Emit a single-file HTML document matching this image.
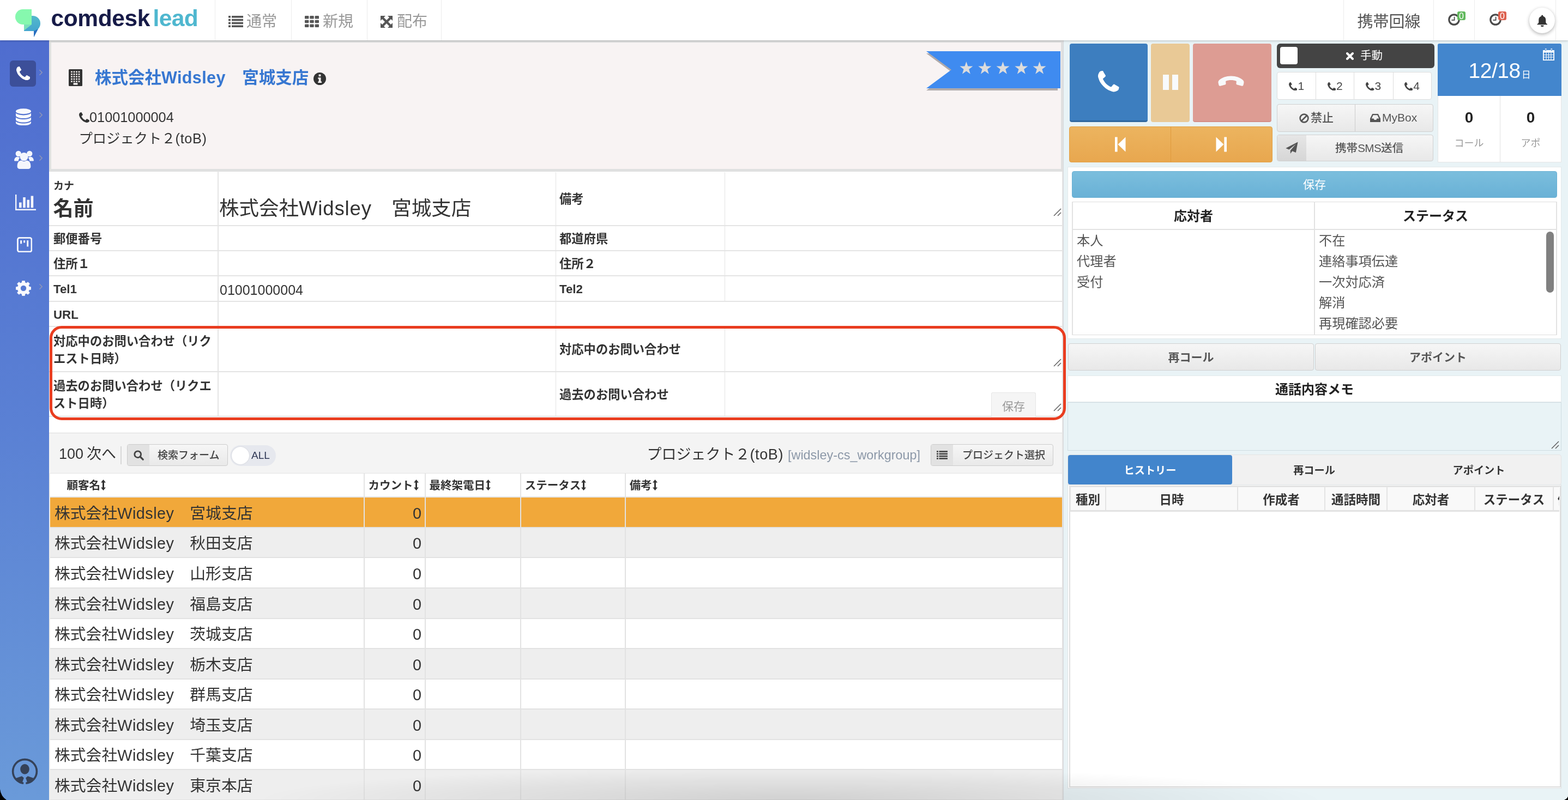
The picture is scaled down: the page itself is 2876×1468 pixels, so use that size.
<!DOCTYPE html>
<html lang="ja">
<head>
<meta charset="utf-8">
<title>comdesk lead</title>
<style>
*{box-sizing:border-box;margin:0;padding:0}
html,body{width:2876px;height:1468px;overflow:hidden;background:#fff}
body{font-family:"Liberation Sans","Noto Sans CJK JP",sans-serif;color:#333;font-size:28px;line-height:1.2;position:relative}
svg{display:block}
table{border-collapse:collapse;border-spacing:0}
.a{position:absolute}
.c{display:flex;align-items:center;justify-content:center;white-space:nowrap}

/* ---------- top bar ---------- */
#topbar{will-change:transform;position:absolute;left:0;top:0;width:2876px;height:74px;background:#fff;z-index:5;box-shadow:0 1px 4px rgba(0,0,0,.22)}
#logo-mark{position:absolute;left:27px;top:16px}
#logo-text{position:absolute;left:93.5px;top:6px;font-weight:bold;font-size:42.5px;line-height:56px;letter-spacing:-.4px;color:#171b48;white-space:nowrap}
#logo-text span{color:#4fb7cf;margin-left:5.5px;letter-spacing:-.6px}
.tsep{position:absolute;top:0;height:74px;width:1px;background:#ececec}
.nav{position:absolute;top:0;height:74px;color:#999;font-size:28px;line-height:74px;white-space:nowrap}
.nav svg{position:absolute;left:0;top:29px}
.nav span{position:absolute;top:3px}
#carrier{position:absolute;left:2489.5px;top:2.5px;font-size:29px;line-height:74px;color:#555;white-space:nowrap}
.badge{position:absolute;top:21px;width:15px;height:16px;border-radius:3px;color:#fff;font-size:16px;line-height:17px;text-align:center;transform-origin:50% 50%}
#bell{position:absolute;left:2805px;top:14px;width:47px;height:47px;border-radius:50%;background:#fff;box-shadow:0 2px 6px rgba(0,0,0,.3)}

/* ---------- sidebar ---------- */
#side{will-change:transform;z-index:4;position:absolute;left:0;top:74px;width:90px;height:1394px;background:linear-gradient(180deg,#4f6dcf 0%,#5a80d4 50%,#6a9ad9 100%)}
#side .act{position:absolute;left:18px;top:37px;width:48px;height:48px;border-radius:6px;background:#3c4f99}
#side svg{position:absolute}

/* ---------- left main ---------- */
#main{will-change:transform;position:absolute;left:0;top:0;width:1951px;height:1468px;background:#fff;overflow:hidden}
#head{position:absolute;left:90px;top:74px;width:1860px;height:241px;background:#f8f3f3;border:4px solid #dfe0e0;border-bottom-width:5px}
#title{position:absolute;left:174px;top:117px;font-size:30.5px;line-height:50px;font-weight:bold;color:#3777d1;white-space:nowrap}
#hphone{position:absolute;left:164px;top:197px;font-size:25.3px;line-height:36px;color:#333;white-space:nowrap}
#hproj{position:absolute;left:144.5px;top:236px;font-size:25.3px;line-height:36px;color:#333;white-space:nowrap}
#ribbon{position:absolute;left:1699px;top:90px}
/* form table */
#form{position:absolute;left:90px;top:314px;width:1859px;table-layout:fixed}
#form tr:first-child td{border-top-color:transparent}
#form td:first-child{border-left:none;border-right-width:2px}
#form td{border:2px solid #e4e4e4;border-left-width:1px;border-right-width:1px;vertical-align:middle;padding:4.5px 0 0 8px;font-size:25px;white-space:nowrap;overflow:hidden;position:relative}
#form td.l{font-weight:bold;font-size:22.3px;color:#333}
#form td.v{padding-left:2px}
#form tr.r1{height:98.5px}
#form tr.r2{height:46.375px}
#form tr.r3{height:82.6px}
.grip{position:absolute;right:1.5px;bottom:3px}
#redbox{position:absolute;left:90.5px;top:597.5px;width:1864px;height:173px;border:5px solid #e93d20;border-radius:22px;pointer-events:none;z-index:6}
#fsave{position:absolute;left:1818px;top:720px;width:82px;height:46px;background:#f5f5f5;border:1px solid #e6e6e6;border-bottom:none;border-radius:3px 3px 0 0;color:#999;font-size:21px;line-height:50px;text-align:center;z-index:2}

/* list */
#lbar{position:absolute;left:90px;top:794px;width:1858px;height:75px;background:#f4f4f4;border-top:1px solid #dcdcdc}
#lcount{position:absolute;left:18px;top:20px;font-size:27px;word-spacing:-1.5px;line-height:36px;color:#333;white-space:nowrap}
.btn{position:absolute;height:40px;border:1px solid #ccc;border-radius:4px;background:linear-gradient(180deg,#f6f6f6,#e9e9e9);font-size:20px;color:#444;white-space:nowrap;overflow:hidden}
.btn .ic{position:absolute;left:0;top:0;bottom:0;width:40px;background:#e2e2e2}
.btn .tx{position:absolute;top:0;line-height:40px;font-weight:500;font-size:19px}
#toggle{position:absolute;left:332px;top:22px;width:84px;height:38px;border-radius:19px;background:#e6e8ee;font-size:19px;line-height:38px;color:#2d3553}
#toggle i{position:absolute;left:3px;top:3px;width:32px;height:32px;border-radius:50%;background:#fff;box-shadow:0 0 2px rgba(0,0,0,.15)}
#toggle span{position:absolute;left:39px;top:0}
#lproj{position:absolute;left:1096.5px;top:19px;font-size:27px;line-height:40px;color:#333;white-space:nowrap}
#lproj small{font-size:23.4px;color:#8c98a8;margin-left:8px}
#list{position:absolute;left:89px;top:868px;width:1860px;table-layout:fixed}
#list th{height:43.9px;background:#fff;border:2px solid #e4e4e4;border-top:1px solid #e4e4e4;font-size:20.5px;font-weight:bold;text-align:left;padding:3px 0 0 7px;white-space:nowrap;color:#333}
#list td{height:55.55px;border:2px solid #e2e2e2;font-size:28.8px;padding:4px 5.5px 0 8px;white-space:nowrap;color:#333}
#list tr:nth-child(even) td{background:#eee}
#list tr.sel td{background:#f1a83a}
#list td.n{text-align:right}
.srt{display:inline-block;vertical-align:-2px;margin-left:1px}

#form .kana{font-size:19px;line-height:22px;font-weight:bold;position:absolute;left:8px;top:15px}
#form .nm{font-size:37px;line-height:44px;font-weight:bold;position:absolute;left:7.5px;top:46px}
#form .nmv{font-size:36.5px;line-height:44px;position:absolute;left:1px;top:44.5px}
#form td.wr{white-space:normal;line-height:32px}
#form td.l+td.v+td.l{padding-left:6.5px}
#shade{position:absolute;left:0;top:1378px;width:2876px;height:90px;z-index:8;pointer-events:none;background:radial-gradient(ellipse 980px 60px at 1450px 100%,rgba(0,0,0,.12),rgba(0,0,0,.07) 45%,rgba(0,0,0,0) 100%)}

/* right panel */
#right{will-change:transform;position:absolute;left:1951px;top:74px;width:925px;height:1394px;background:#e9f3f6}
#right>*{margin-left:-1951px;margin-top:-74px}
.bt{border-radius:4px}
.lnum{font-size:21px;line-height:40px;color:#444}
.gbtn{border:1px solid #d0d0d0;border-radius:4px;background:linear-gradient(180deg,#f6f6f6,#e8e8e8)}
.gtx{font-size:21px;line-height:36px;color:#555;font-weight:500;white-space:nowrap}
#date{left:2693.5px;top:102px;font-size:39px;line-height:56px;color:#fff;font-weight:300;white-space:nowrap;letter-spacing:-.5px}
#date span{font-size:16.5px;font-weight:400;margin-left:2.5px}
.stn{top:196px;text-align:center;font-size:28px;line-height:40px;font-weight:bold;color:#222}
.stl{top:248px;text-align:center;font-size:18px;line-height:30px;color:#999}
#rsave{left:1966px;top:314px;width:890px;height:49px;border-radius:4px;background:linear-gradient(180deg,#7bbedd,#69b1d6);color:#fff;font-size:21px;border:1px solid #6ab0d3}
#rsel{left:1966px;top:370px;width:890px;height:243.5px;table-layout:fixed;border:1px solid #ddd}
#rsel th{height:50px;font-size:24px;font-weight:bold;color:#222;border:2px solid #e2e2e2;border-top:none;text-align:center;padding-top:5px}
#rsel td{vertical-align:top;border-left:2px solid #e2e2e2;border-right:2px solid #e2e2e2;padding:1px 0 0 7px;font-size:24.2px;color:#555}
#rsel p{line-height:38.200px;white-space:nowrap}
.rb{font-size:21px;font-weight:bold;color:#555;padding-top:2px}
#memoh{left:1958px;top:689px;width:906px;height:49px;background:#fff;border:1px solid #e3e9eb;font-size:24px;font-weight:bold;color:#222;padding-top:4px}
#memo{left:1958px;top:738px;width:906px;height:89px;background:#e9f3f6;border:1px solid #cfdde2}
#memo .grip{right:3px;bottom:3px}
.tab{font-size:19.2px;font-weight:bold;color:#333;padding-top:4px}
#hist{left:1962px;top:892px;width:898px;height:47px;overflow:hidden;border-bottom:3px solid #e2e2e2}
#hist table{table-layout:fixed;width:946px}
#hist th{height:46px;background:#f9f9f9;border:2px solid #e4e4e4;border-bottom:none;font-size:22.500px;font-weight:bold;color:#333;text-align:center;white-space:nowrap;padding:2px 0 0}
#list .w{letter-spacing:.5px}
#list td:first-child,#list th:first-child{border-left:3px solid #ededed}
#title .w{letter-spacing:.4px}
#form .w{letter-spacing:.86px}
#hproj .w{letter-spacing:.64px}
#lproj .w{letter-spacing:.6px}
</style>
</head>
<body>

<div id="topbar">
  <svg id="logo-mark" width="48" height="54" viewBox="0 0 48 54">
    <linearGradient id="lg" x1="0" y1="0" x2="0" y2="1"><stop offset="0" stop-color="#53b9cb"/><stop offset="1" stop-color="#3e9dd0"/></linearGradient><path d="M17 13 h16 a14 14 0 0 1 14 14 v0 a14 14 0 0 1 -4 10 l-8 15 v-11 h-18 z" fill="url(#lg)"/>
    <path d="M35 41 l8 -4 l-8 15 z" fill="#2b6fc0"/>
    <path d="M15 1 h16 v28 h-16 a14 14 0 0 1 0 -28 z" fill="#86f8ae"/>
    <path d="M17 29 h14 v0 l-14 11 z" fill="#7be0b8"/>
      </svg>
  <div id="logo-text">comdesk<span>lead</span></div>

  <div class="tsep" style="left:394px"></div>
  <div class="nav" style="left:419px;width:100px">
    <svg width="27" height="21" viewBox="0 0 27 21" fill="#555"><rect x="0" y="0" width="4" height="3.6"/><rect x="6" y="0" width="21" height="3.6"/><rect x="0" y="5.8" width="4" height="3.6"/><rect x="6" y="5.8" width="21" height="3.6"/><rect x="0" y="11.6" width="4" height="3.6"/><rect x="6" y="11.6" width="21" height="3.6"/><rect x="0" y="17.4" width="4" height="3.6"/><rect x="6" y="17.4" width="21" height="3.6"/></svg>
    <span style="left:33px">通常</span>
  </div>
  <div class="tsep" style="left:534px"></div>
  <div class="nav" style="left:559px;width:100px">
    <svg width="26" height="21" viewBox="0 0 26 21" fill="#555"><rect x="0" y="0" width="7.4" height="5.6" rx="1.2"/><rect x="9.3" y="0" width="7.4" height="5.6" rx="1.2"/><rect x="18.6" y="0" width="7.4" height="5.6" rx="1.2"/><rect x="0" y="7.7" width="7.4" height="5.6" rx="1.2"/><rect x="9.3" y="7.7" width="7.4" height="5.6" rx="1.2"/><rect x="18.6" y="7.7" width="7.4" height="5.6" rx="1.2"/><rect x="0" y="15.4" width="7.4" height="5.6" rx="1.2"/><rect x="9.3" y="15.4" width="7.4" height="5.6" rx="1.2"/><rect x="18.6" y="15.4" width="7.4" height="5.6" rx="1.2"/></svg>
    <span style="left:33px">新規</span>
  </div>
  <div class="tsep" style="left:673px"></div>
  <div class="nav" style="left:698px;width:100px">
    <svg width="22" height="22" viewBox="0 0 22 22" fill="#555"><path d="M0 0h9l-3 3 5 5 5-5-3-3h9v9l-3-3-5 5 5 5 3-3v9h-9l3-3-5-5-5 5 3 3h-9v-9l3 3 5-5-5-5-3 3z"/></svg>
    <span style="left:30px">配布</span>
  </div>
  <div class="tsep" style="left:809px"></div>

  <div class="tsep" style="left:2464px"></div>
  <div id="carrier">携帯回線</div>
  <div class="tsep" style="left:2629px"></div>
  <svg class="a" style="left:2656px;top:24.500px" width="22" height="22" viewBox="0 0 22 22"><circle cx="11" cy="11" r="9.200" fill="none" stroke="#4a4a4a" stroke-width="3.200"/><path d="M11.600 5.800v6h-5.200" fill="none" stroke="#4a4a4a" stroke-width="1.800"/></svg>
  <div class="badge" style="left:2673px;background:#62b95e">0</div>
  <div class="tsep" style="left:2704px"></div>
  <svg class="a" style="left:2731.5px;top:24.500px" width="22" height="22" viewBox="0 0 22 22"><circle cx="11" cy="11" r="9.200" fill="none" stroke="#4a4a4a" stroke-width="3.200"/><path d="M11.600 5.800v6h-5.200" fill="none" stroke="#4a4a4a" stroke-width="1.800"/></svg>
  <div class="badge" style="left:2748px;background:#dd6250">0</div>
  <div id="bell"><svg class="a" style="left:14px;top:12.500px" width="19.500" height="22.500" viewBox="0 0 21 24"><path d="M10.500 0.500c1 0 1.800 0.800 1.800 1.800v0.500c3.200 0.800 5.200 3.600 5.200 7v4.500c0 1.600 1.200 3.200 3 4.200v1h-20v-1c1.800-1 3-2.600 3-4.200v-4.500c0-3.400 2-6.200 5.200-7v-0.500c0-1 0.800-1.800 1.800-1.800zM7.500 21h6a3 3 0 0 1-6 0z" fill="#333"/></svg></div>
  <div class="tsep" style="left:2853px"></div>
</div>

<div id="side">
  <div class="act"></div>
  <svg style="left:29.5px;top:48px" width="25.2" height="25.2" viewBox="192 128 1408 1408"><path fill="#fff" d="M1600 1240q0 27-10 70.500t-21 68.500q-21 50-122 106-94 51-186 51-27 0-53-3.500t-57.500-12.500-47-14.500-55.500-20.500-49-18q-98-35-175-83-127-79-264-216t-216-264q-48-77-83-175-3-9-18-49t-20.500-55.500-14.500-47-12.500-57.500-3.500-53q0-92 51-186 56-101 106-122 25-11 68.500-21t70.500-10q14 0 21 3 18 6 53 76 11 19 30 54t35 63.500 31 53.500q3 4 17.500 25t21.500 35.500 7 28.500q0 20-28.500 50t-62 55-62 53-28.500 46q0 9 5 22.500t8.500 20.500 14 24 11.500 19q76 137 174 235t235 174q2 1 19 11.500t24 14 20.500 8.500 22.500 5q18 0 46-28.500t53-62 55-62 50-28.500q14 0 28.500 7t35.500 21.500 25 17.500q25 15 53.500 31t63.500 35 54 30q70 35 76 53 3 7 3 21z"/></svg>
  <svg style="left:70.8px;top:52.5px" width="7.5" height="12" viewBox="0 0 8 12"><path d="M1.500 1l5 5-5 5" fill="none" stroke="#8f96b8" stroke-width="1.600"/></svg>
  <svg style="left:28.5px;top:124.5px" width="28" height="31.500" viewBox="0 0 29 32" fill="#f8f9fd"><ellipse cx="14.500" cy="5.200" rx="14.500" ry="5.200"/><path d="M0 8.600c2.500 2.600 8 4 14.500 4s12-1.400 14.500-4v4.600c0 2.900-6.500 5.200-14.500 5.200s-14.500-2.300-14.500-5.200z"/><path d="M0 16.400c2.500 2.600 8 4 14.500 4s12-1.400 14.500-4v4.600c0 2.900-6.500 5.200-14.500 5.200s-14.500-2.300-14.500-5.200z"/><path d="M0 24.200c2.500 2.600 8 4 14.500 4s12-1.400 14.500-4v2.600c0 2.900-6.500 5.200-14.500 5.200s-14.500-2.300-14.500-5.200z"/></svg>
  <svg style="left:70.8px;top:131px" width="7.5" height="12" viewBox="0 0 8 12"><path d="M1.500 1l5 5-5 5" fill="none" stroke="#8f96b8" stroke-width="1.600"/></svg>
  <svg style="left:26px;top:202px" width="36" height="34" viewBox="0 0 36 34" fill="#f4f6fc"><circle cx="7.800" cy="6" r="5.200"/><circle cx="28.200" cy="6" r="5.200"/><path d="M0 19.500c0-5 2.500-7.800 6-7.800 1.500 0 3 .8 4.200 1.700-1.600 1.800-2.400 4-2.400 6.100h-5.800c-1.200 0-2-.5-2-1.500z"/><path d="M36 19.500c0-5-2.500-7.800-6-7.800-1.500 0-3 .8-4.200 1.700 1.600 1.800 2.400 4 2.400 6.100h5.800c1.200 0 2-.5 2-1.500z"/><circle cx="18" cy="11.600" r="7.600"/><path d="M5.600 29.500c0-7.500 3.200-11 7.200-11 1.400 0 2.900 1.700 5.200 1.700s3.800-1.700 5.200-1.700c4 0 7.200 3.500 7.200 11 0 2.800-2 4.500-4.600 4.500h-15.600c-2.600 0-4.600-1.700-4.600-4.500z"/></svg>
  <svg style="left:70.8px;top:209.5px" width="7.5" height="12" viewBox="0 0 8 12"><path d="M1.500 1l5 5-5 5" fill="none" stroke="#8f96b8" stroke-width="1.600"/></svg>
  <svg style="left:28px;top:283px" width="38" height="29" viewBox="0 0 38 29" fill="#f4f6fc"><path d="M0 0h2.400v26.600h35.600v2.400h-38z"/><rect x="7" y="14.500" width="4.600" height="9.700"/><rect x="14.200" y="5" width="4.600" height="19.200"/><rect x="21.400" y="9.700" width="4.600" height="14.500"/><rect x="28.600" y="2.500" width="4.600" height="21.700"/></svg>
  <svg style="left:30.800px;top:360.800px" width="28.400" height="28.400" viewBox="0 0 30 30"><rect x="1.500" y="1.500" width="27" height="27" rx="3.500" fill="none" stroke="#f4f6fc" stroke-width="3"/><rect x="6.500" y="6.500" width="3.200" height="6.500" fill="#f4f6fc"/><rect x="12.800" y="6.500" width="3.200" height="4.500" fill="#f4f6fc"/><rect x="19.200" y="6.500" width="3.200" height="12" fill="#f4f6fc"/></svg>
  <svg style="left:28.5px;top:440.5px" width="28" height="28" viewBox="0 0 32 32"><path fill="#f8f9fd" fill-rule="evenodd" stroke="#f8f9fd" stroke-width="1" stroke-linejoin="round" d="M12.85 4.11 L13.50 0.20 L18.50 0.20 L19.15 4.11 L22.18 5.36 L25.40 3.06 L28.94 6.60 L26.64 9.82 L27.89 12.85 L31.80 13.50 L31.80 18.50 L27.89 19.15 L26.64 22.18 L28.94 25.40 L25.40 28.94 L22.18 26.64 L19.15 27.89 L18.50 31.80 L13.50 31.80 L12.85 27.89 L9.82 26.64 L6.60 28.94 L3.06 25.40 L5.36 22.18 L4.11 19.15 L0.20 18.50 L0.20 13.50 L4.11 12.85 L5.36 9.82 L3.06 6.60 L6.60 3.06 L9.82 5.36Z M9.60 16.00 a6.40 6.40 0 1 0 12.80 0 a6.40 6.40 0 1 0 -12.80 0Z"/></svg>
  <svg style="left:70.8px;top:445.7px" width="7.5" height="12" viewBox="0 0 8 12"><path d="M1.500 1l5 5-5 5" fill="none" stroke="#8f96b8" stroke-width="1.600"/></svg>
  <svg style="left:21px;top:1317px" width="49" height="49" viewBox="0 0 49 49"><circle cx="24.500" cy="24.500" r="21.900" fill="none" stroke="#354259" stroke-width="3.600" stroke-dasharray="32.200 4.400 200"/><ellipse cx="24.500" cy="20.300" rx="8.300" ry="9.400" fill="#354259"/><path d="M7.900 37L19.100 33.300L22.800 36.600L20 44.500L22.300 47.200A22.700 22.700 0 0 1 7.900 37ZM41.100 37L29.900 33.300L26.200 36.600L29 44.500L26.700 47.200A22.700 22.700 0 0 0 41.100 37Z" fill="#354259"/></svg>
</div>

<div id="main">
  <div class="a" style="left:1948px;top:74px;width:2px;height:1394px;background:#e4e4e4"></div>
  <div class="a" style="left:1949.5px;top:74px;width:1.5px;height:1394px;background:#d6d8dd"></div>
  <div id="head"></div>
  <svg class="a" style="left:126px;top:126.500px" width="25" height="31" viewBox="0 0 25 31"><rect x="0" y="0" width="25" height="31" rx="1.500" fill="#333"/><g fill="#f8f3f3"><rect x="4.2" y="3.6" width="2.6" height="2.6"/><rect x="8.7" y="3.6" width="2.6" height="2.6"/><rect x="13.2" y="3.6" width="2.6" height="2.6"/><rect x="17.7" y="3.6" width="2.6" height="2.6"/><rect x="4.2" y="8" width="2.6" height="2.6"/><rect x="8.7" y="8" width="2.6" height="2.6"/><rect x="13.2" y="8" width="2.6" height="2.6"/><rect x="17.7" y="8" width="2.6" height="2.6"/><rect x="4.2" y="12.4" width="2.6" height="2.6"/><rect x="8.7" y="12.4" width="2.6" height="2.6"/><rect x="13.2" y="12.4" width="2.6" height="2.6"/><rect x="17.7" y="12.4" width="2.6" height="2.6"/><rect x="4.2" y="16.8" width="2.6" height="2.6"/><rect x="8.7" y="16.8" width="2.6" height="2.6"/><rect x="13.2" y="16.8" width="2.6" height="2.6"/><rect x="17.7" y="16.8" width="2.6" height="2.6"/><rect x="4.2" y="21.2" width="2.6" height="2.6"/><rect x="8.7" y="21.2" width="2.6" height="2.6"/><rect x="13.2" y="21.2" width="2.6" height="2.6"/><rect x="17.7" y="21.2" width="2.6" height="2.6"/><rect x="8.6" y="25.200" width="7.8" height="3.400"/></g></svg>
  <div id="title">株式会社<span class="w">Widsley</span>　宮城支店</div>
  <svg class="a" style="left:575px;top:132.500px" width="23" height="23" viewBox="0 0 23 23"><circle cx="11.500" cy="11.500" r="11.500" fill="#333"/><path d="M9.600 3.600h3.800v3.600h-3.800zM8.300 9.300h5.200v7.300h1.500v2.400h-6.700v-2.400h1.400v-4.900h-1.400z" fill="#f8f3f3"/></svg>
  <svg class="a" style="left:145px;top:206px" width="19" height="19" viewBox="192 128 1408 1408"><path fill="#333" d="M1600 1240q0 27-10 70.500t-21 68.500q-21 50-122 106-94 51-186 51-27 0-53-3.500t-57.500-12.500-47-14.500-55.500-20.500-49-18q-98-35-175-83-127-79-264-216t-216-264q-48-77-83-175-3-9-18-49t-20.500-55.500-14.500-47-12.500-57.500-3.500-53q0-92 51-186 56-101 106-122 25-11 68.500-21t70.500-10q14 0 21 3 18 6 53 76 11 19 30 54t35 63.500 31 53.500q3 4 17.500 25t21.500 35.500 7 28.500q0 20-28.500 50t-62 55-62 53-28.500 46q0 9 5 22.500t8.500 20.500 14 24 11.500 19q76 137 174 235t235 174q2 1 19 11.500t24 14 20.500 8.500 22.500 5q18 0 46-28.500t53-62 55-62 50-28.500q14 0 28.500 7t35.500 21.500 25 17.500q25 15 53.500 31t63.500 35 54 30q70 35 76 53 3 7 3 21z"/></svg>
  <div id="hphone">01001000004</div>
  <div id="hproj">プロジェクト２<span class="w">(toB)</span></div>
  <svg id="ribbon" width="250" height="80" viewBox="0 0 250 80"><polygon points="0,8 241,8 241,76 0,76 46,42" fill="#b0aaaa"/><polygon points="0,4 246,4 246,72 0,72 46,38" fill="#3f8bf0"/><g fill="#dcdcdc"><polygon points="73.4,22.9 76.3,31.5 85.4,31.6 78.2,37.0 80.8,45.7 73.4,40.5 66.0,45.7 68.6,37.0 61.4,31.6 70.5,31.5"/><polygon points="107.3,22.9 110.2,31.5 119.3,31.6 112.1,37.0 114.7,45.7 107.3,40.5 99.9,45.7 102.5,37.0 95.3,31.6 104.4,31.5"/><polygon points="140.5,22.9 143.4,31.5 152.5,31.6 145.3,37.0 147.9,45.7 140.5,40.5 133.1,45.7 135.7,37.0 128.5,31.6 137.6,31.5"/><polygon points="174.3,22.9 177.2,31.5 186.3,31.6 179.1,37.0 181.7,45.7 174.3,40.5 166.9,45.7 169.5,37.0 162.3,31.6 171.4,31.5"/><polygon points="207.6,22.9 210.5,31.5 219.6,31.6 212.4,37.0 215.0,45.7 207.6,40.5 200.2,45.7 202.8,37.0 195.6,31.6 204.7,31.5"/></g></svg>

  <table id="form">
    <colgroup><col style="width:310px"><col style="width:619px"><col style="width:310px"><col style="width:620px"></colgroup>
    <tr class="r1">
      <td class="l"><div class="kana">カナ</div><div class="nm">名前</div></td>
      <td class="v"><div class="nmv">株式会社<span class="w">Widsley</span>　宮城支店</div></td>
      <td class="l">備考</td>
      <td class="v"><svg class="grip" style="bottom:16px" width="15" height="15" viewBox="0 0 15 15"><path d="M1 14L14 1M8 14L14 8" stroke="#555" stroke-width="1.400" fill="none"/></svg></td>
    </tr>
    <tr class="r2"><td class="l">郵便番号</td><td class="v"></td><td class="l">都道府県</td><td class="v"></td></tr>
    <tr class="r2"><td class="l">住所１</td><td class="v"></td><td class="l">住所２</td><td class="v"></td></tr>
    <tr class="r2"><td class="l">Tel1</td><td class="v">01001000004</td><td class="l">Tel2</td><td class="v"></td></tr>
    <tr class="r2"><td class="l">URL</td><td class="v"></td><td class="v" colspan="2"></td></tr>
    <tr class="r3"><td class="l wr">対応中のお問い合わせ（リク<br>エスト日時）</td><td class="v"></td><td class="l">対応中のお問い合わせ</td><td class="v"><svg class="grip" style="bottom:8px" width="15" height="15" viewBox="0 0 15 15"><path d="M1 14L14 1M8 14L14 8" stroke="#555" stroke-width="1.400" fill="none"/></svg></td></tr>
    <tr class="r3"><td class="l wr">過去のお問い合わせ（リクエ<br>スト日時）</td><td class="v"></td><td class="l">過去のお問い合わせ</td><td class="v"><svg class="grip" style="bottom:8px" width="15" height="15" viewBox="0 0 15 15"><path d="M1 14L14 1M8 14L14 8" stroke="#555" stroke-width="1.400" fill="none"/></svg></td></tr>
  </table>
  <div id="fsave">保存</div>

  <div id="lbar">
    <div id="lcount">100 次へ</div>
    <div class="a" style="left:131px;top:24px;width:2px;height:33px;background:#d8d8d8"></div>
    <div class="btn" style="left:143px;top:20px;width:185px">
      <div class="ic"><svg class="a" style="left:11px;top:10px" width="19" height="19" viewBox="0 0 19 19"><circle cx="7.700" cy="7.700" r="5.900" fill="none" stroke="#444" stroke-width="2.800"/><path d="M12 12l5.200 5.200" stroke="#444" stroke-width="3.200" stroke-linecap="round"/></svg></div>
      <div class="tx" style="left:55px">検索フォーム</div>
    </div>
    <div id="toggle"><i></i><span>ALL</span></div>
    <div id="lproj">プロジェクト２<span class="w">(toB)</span><small>[widsley-cs_workgroup]</small></div>
    <div class="btn" style="left:1617px;top:20px;width:225px">
      <div class="ic"><svg class="a" style="left:10px;top:11px" width="20" height="16" viewBox="0 0 27 21" fill="#444"><rect x="0" y="0" width="4" height="3.600"/><rect x="6" y="0" width="21" height="3.600"/><rect x="0" y="5.800" width="4" height="3.600"/><rect x="6" y="5.800" width="21" height="3.600"/><rect x="0" y="11.600" width="4" height="3.600"/><rect x="6" y="11.600" width="21" height="3.600"/><rect x="0" y="17.400" width="4" height="3.600"/><rect x="6" y="17.400" width="21" height="3.600"/></svg></div>
      <div class="tx" style="left:57px">プロジェクト選択</div>
    </div>
  </div>

  <table id="list">
    <colgroup><col style="width:577px"><col style="width:112px"><col style="width:175.3px"><col style="width:192px"><col style="width:802.7px"></colgroup>
    <thead><tr><th style="padding-left:30.5px">顧客名<svg class="srt" width="9" height="20" viewBox="0 0 9 20"><path d="M4.500 0l4.500 5.500h-3v9h3l-4.500 5.500-4.500-5.500h3v-9h-3z" fill="#333"/></svg></th><th>カウント<svg class="srt" width="9" height="20" viewBox="0 0 9 20"><path d="M4.500 0l4.500 5.500h-3v9h3l-4.500 5.500-4.500-5.500h3v-9h-3z" fill="#333"/></svg></th><th>最終架電日<svg class="srt" width="9" height="20" viewBox="0 0 9 20"><path d="M4.500 0l4.500 5.500h-3v9h3l-4.500 5.500-4.500-5.500h3v-9h-3z" fill="#333"/></svg></th><th>ステータス<svg class="srt" width="9" height="20" viewBox="0 0 9 20"><path d="M4.500 0l4.500 5.500h-3v9h3l-4.500 5.500-4.500-5.500h3v-9h-3z" fill="#333"/></svg></th><th>備考<svg class="srt" width="9" height="20" viewBox="0 0 9 20"><path d="M4.500 0l4.500 5.500h-3v9h3l-4.500 5.500-4.500-5.500h3v-9h-3z" fill="#333"/></svg></th></tr></thead>
    <tbody>
      <tr class="sel"><td>株式会社<span class="w">Widsley</span>　宮城支店</td><td class="n">0</td><td></td><td></td><td></td></tr>
      <tr><td>株式会社<span class="w">Widsley</span>　秋田支店</td><td class="n">0</td><td></td><td></td><td></td></tr>
      <tr><td>株式会社<span class="w">Widsley</span>　山形支店</td><td class="n">0</td><td></td><td></td><td></td></tr>
      <tr><td>株式会社<span class="w">Widsley</span>　福島支店</td><td class="n">0</td><td></td><td></td><td></td></tr>
      <tr><td>株式会社<span class="w">Widsley</span>　茨城支店</td><td class="n">0</td><td></td><td></td><td></td></tr>
      <tr><td>株式会社<span class="w">Widsley</span>　栃木支店</td><td class="n">0</td><td></td><td></td><td></td></tr>
      <tr><td>株式会社<span class="w">Widsley</span>　群馬支店</td><td class="n">0</td><td></td><td></td><td></td></tr>
      <tr><td>株式会社<span class="w">Widsley</span>　埼玉支店</td><td class="n">0</td><td></td><td></td><td></td></tr>
      <tr><td>株式会社<span class="w">Widsley</span>　千葉支店</td><td class="n">0</td><td></td><td></td><td></td></tr>
      <tr><td>株式会社<span class="w">Widsley</span>　東京本店</td><td class="n">0</td><td></td><td></td><td></td></tr>
    </tbody>
  </table>
</div>

<div id="right">

  <div class="a bt" style="left:1962px;top:80px;width:143px;height:144px;background:#3d7ebf;border-bottom:3px solid #32699f"></div>
  <svg class="a" style="left:2014px;top:130px" width="38.5" height="38.5" viewBox="192 128 1408 1408"><path fill="#fff" d="M1600 1240q0 27-10 70.500t-21 68.500q-21 50-122 106-94 51-186 51-27 0-53-3.500t-57.500-12.500-47-14.500-55.500-20.500-49-18q-98-35-175-83-127-79-264-216t-216-264q-48-77-83-175-3-9-18-49t-20.500-55.500-14.500-47-12.500-57.500-3.500-53q0-92 51-186 56-101 106-122 25-11 68.500-21t70.500-10q14 0 21 3 18 6 53 76 11 19 30 54t35 63.500 31 53.500q3 4 17.500 25t21.500 35.500 7 28.500q0 20-28.500 50t-62 55-62 53-28.500 46q0 9 5 22.500t8.500 20.500 14 24 11.500 19q76 137 174 235t235 174q2 1 19 11.500t24 14 20.500 8.500 22.500 5q18 0 46-28.500t53-62 55-62 50-28.500q14 0 28.500 7t35.500 21.500 25 17.500q25 15 53.500 31t63.500 35 54 30q70 35 76 53 3 7 3 21z"/></svg>
  <div class="a bt" style="left:2111px;top:80px;width:71px;height:144px;background:#e9c996"></div>
  <div class="a" style="left:2133px;top:137px;width:11px;height:27.500px;background:#f8fafc"></div>
  <div class="a" style="left:2149.500px;top:137px;width:11px;height:27.500px;background:#f8fafc"></div>
  <div class="a bt" style="left:2188px;top:80px;width:144px;height:144px;background:#dd9c93;border-bottom:2px solid #d48d85"></div>
  <svg class="a" style="left:2234px;top:139px" width="48" height="21" viewBox="0 0 48 21"><path d="M24 0.500c9 0 17 3 22 7.800 1.500 1.500 1.800 3.500 1.300 5.500l-0.800 3.300c-0.300 1.300-1.500 2-2.800 1.700l-8.500-2.200c-1.100-0.300-1.800-1.300-1.700-2.400l0.400-4.300c-3-1.200-6.400-1.800-9.900-1.800s-6.900 0.600-9.900 1.800l0.400 4.300c0.100 1.100-0.600 2.100-1.700 2.400l-8.500 2.200c-1.300 0.300-2.500-0.400-2.800-1.700l-0.800-3.300c-0.500-2-0.200-4 1.300-5.500 5-4.800 13-7.800 22-7.800z" fill="#f8fafc"/></svg>

  <div class="a" style="left:1961px;top:232px;width:373px;height:66px;border-radius:4px;border:1px solid #e3a044;background:linear-gradient(180deg,#ecb45f,#e8a74f)"></div>
  <div class="a" style="left:2147px;top:233px;width:1px;height:64px;background:#e09a3c"></div>
  <svg class="a" style="left:2045px;top:250.500px" width="20" height="28" viewBox="0 0 20 28"><path d="M0 0.500h4.600v27h-4.600zM19.500 0.500v27l-14-13.500z" fill="#fff"/></svg>
  <svg class="a" style="left:2230px;top:250.500px" width="20" height="28" viewBox="0 0 20 28"><path d="M20 0.500h-4.600v27h4.600zM0.500 0.500v27l14-13.500z" fill="#fff"/></svg>

  <div class="a" style="left:2342px;top:80px;width:289px;height:45px;border-radius:6px;background:#444"></div>
  <div class="a" style="left:2348px;top:86px;width:32px;height:32px;border-radius:4px;background:#fff"></div>
  <svg class="a" style="left:2469px;top:96px" width="14" height="14" viewBox="0 0 14 14"><path d="M2 2l10 10M12 2l-10 10" stroke="#fff" stroke-width="4" stroke-linecap="round"/></svg>
  <div class="a" style="left:2495px;top:84px;font-size:20.500px;line-height:36px;color:#fff;white-space:nowrap">手動</div>

  <div class="a" style="left:2341.500px;top:132px;width:284.500px;height:50.500px;border:1px solid #ddd;border-radius:4px;background:#fff"></div>
  <svg class="a" style="left:2363.9px;top:150.5px" width="15.5" height="15.5" viewBox="192 128 1408 1408"><path fill="#444" d="M1600 1240q0 27-10 70.500t-21 68.500q-21 50-122 106-94 51-186 51-27 0-53-3.500t-57.500-12.500-47-14.500-55.500-20.500-49-18q-98-35-175-83-127-79-264-216t-216-264q-48-77-83-175-3-9-18-49t-20.500-55.500-14.500-47-12.500-57.500-3.500-53q0-92 51-186 56-101 106-122 25-11 68.500-21t70.500-10q14 0 21 3 18 6 53 76 11 19 30 54t35 63.500 31 53.500q3 4 17.500 25t21.500 35.500 7 28.500q0 20-28.500 50t-62 55-62 53-28.500 46q0 9 5 22.500t8.500 20.500 14 24 11.500 19q76 137 174 235t235 174q2 1 19 11.500t24 14 20.500 8.500 22.500 5q18 0 46-28.500t53-62 55-62 50-28.500q14 0 28.500 7t35.500 21.500 25 17.500q25 15 53.500 31t63.500 35 54 30q70 35 76 53 3 7 3 21z"/></svg><div class="a lnum" style="left:2380.4px;top:138px">1</div><svg class="a" style="left:2434.5px;top:150.5px" width="15.5" height="15.5" viewBox="192 128 1408 1408"><path fill="#444" d="M1600 1240q0 27-10 70.500t-21 68.500q-21 50-122 106-94 51-186 51-27 0-53-3.500t-57.500-12.500-47-14.500-55.500-20.500-49-18q-98-35-175-83-127-79-264-216t-216-264q-48-77-83-175-3-9-18-49t-20.500-55.500-14.500-47-12.500-57.500-3.500-53q0-92 51-186 56-101 106-122 25-11 68.500-21t70.500-10q14 0 21 3 18 6 53 76 11 19 30 54t35 63.500 31 53.500q3 4 17.500 25t21.500 35.500 7 28.500q0 20-28.500 50t-62 55-62 53-28.500 46q0 9 5 22.500t8.500 20.500 14 24 11.500 19q76 137 174 235t235 174q2 1 19 11.500t24 14 20.500 8.500 22.500 5q18 0 46-28.500t53-62 55-62 50-28.500q14 0 28.500 7t35.500 21.500 25 17.500q25 15 53.500 31t63.500 35 54 30q70 35 76 53 3 7 3 21z"/></svg><div class="a lnum" style="left:2451px;top:138px">2</div><div class="a" style="left:2413.3px;top:133px;width:1px;height:49px;background:#ddd"></div><svg class="a" style="left:2505px;top:150.5px" width="15.5" height="15.5" viewBox="192 128 1408 1408"><path fill="#444" d="M1600 1240q0 27-10 70.500t-21 68.500q-21 50-122 106-94 51-186 51-27 0-53-3.500t-57.500-12.500-47-14.500-55.500-20.500-49-18q-98-35-175-83-127-79-264-216t-216-264q-48-77-83-175-3-9-18-49t-20.500-55.500-14.500-47-12.500-57.500-3.500-53q0-92 51-186 56-101 106-122 25-11 68.500-21t70.500-10q14 0 21 3 18 6 53 76 11 19 30 54t35 63.500 31 53.500q3 4 17.500 25t21.500 35.500 7 28.500q0 20-28.500 50t-62 55-62 53-28.500 46q0 9 5 22.500t8.500 20.500 14 24 11.500 19q76 137 174 235t235 174q2 1 19 11.500t24 14 20.500 8.500 22.500 5q18 0 46-28.500t53-62 55-62 50-28.500q14 0 28.500 7t35.500 21.500 25 17.500q25 15 53.500 31t63.500 35 54 30q70 35 76 53 3 7 3 21z"/></svg><div class="a lnum" style="left:2521.5px;top:138px">3</div><div class="a" style="left:2483.2px;top:133px;width:1px;height:49px;background:#ddd"></div><svg class="a" style="left:2575.8px;top:150.5px" width="15.5" height="15.5" viewBox="192 128 1408 1408"><path fill="#444" d="M1600 1240q0 27-10 70.500t-21 68.500q-21 50-122 106-94 51-186 51-27 0-53-3.500t-57.500-12.500-47-14.500-55.500-20.500-49-18q-98-35-175-83-127-79-264-216t-216-264q-48-77-83-175-3-9-18-49t-20.500-55.500-14.500-47-12.500-57.500-3.500-53q0-92 51-186 56-101 106-122 25-11 68.500-21t70.500-10q14 0 21 3 18 6 53 76 11 19 30 54t35 63.500 31 53.500q3 4 17.500 25t21.500 35.500 7 28.500q0 20-28.500 50t-62 55-62 53-28.500 46q0 9 5 22.500t8.500 20.500 14 24 11.500 19q76 137 174 235t235 174q2 1 19 11.500t24 14 20.500 8.500 22.500 5q18 0 46-28.500t53-62 55-62 50-28.500q14 0 28.500 7t35.500 21.500 25 17.500q25 15 53.500 31t63.500 35 54 30q70 35 76 53 3 7 3 21z"/></svg><div class="a lnum" style="left:2592.3px;top:138px">4</div><div class="a" style="left:2554.5px;top:133px;width:1px;height:49px;background:#ddd"></div>

  <div class="a gbtn" style="left:2341.500px;top:191px;width:287px;height:50.500px"></div>
  <div class="a" style="left:2485px;top:192px;width:1px;height:49px;background:#ccc"></div>
  <svg class="a" style="left:2383px;top:207.500px" width="18" height="18" viewBox="0 0 18 18"><circle cx="9" cy="9" r="7.400" fill="none" stroke="#555" stroke-width="2.600"/><path d="M4 14L14 4" stroke="#555" stroke-width="2.600"/></svg>
  <div class="a gtx" style="left:2404px;top:198px">禁止</div>
  <svg class="a" style="left:2513px;top:209px" width="19" height="15" viewBox="0 0 19 15"><path d="M4.200 0h10.600l4.200 8.500v6.500h-19v-6.500zM5.600 2.200l-2.900 6.300h3.800l1.200 2.400h3.600l1.200-2.400h3.800l-2.900-6.300z" fill="#555" fill-rule="evenodd"/></svg>
  <div class="a gtx" style="left:2535px;top:198px">MyBox</div>

  <div class="a gbtn" style="left:2341.500px;top:247px;width:287px;height:48.500px"></div>
  <div class="a" style="left:2342.500px;top:248px;width:53px;height:46.500px;border-radius:3px 0 0 3px;background:linear-gradient(180deg,#e6e6e6,#d6d6d6)"></div>
  <svg class="a" style="left:2358px;top:259.500px" width="23" height="23" viewBox="0 0 23 23"><path d="M22.500 0.500l-3.600 19.500-6.600-2.800-3.500 4.800v-6l10-11.500-12.500 10-6-2.500z" fill="#555"/></svg>
  <div class="a gtx" style="left:2449px;top:253.500px;font-size:20.6px">携帯<span style="letter-spacing:-.6px">SMS</span>送信</div>

  <div class="a" style="left:2637px;top:80px;width:227px;height:96px;background:#4386cd;border-radius:3px 3px 0 0"></div>
  <div class="a" style="left:2637px;top:176px;width:227px;height:122px;background:#fff;border:1px solid #e6e6e6;border-top:none"></div>
  <div class="a" style="left:2751px;top:176px;width:1px;height:122px;background:#e2e2e2"></div>
  <div class="a" id="date">12/18<span>日</span></div>
  <svg class="a" style="left:2830px;top:89px" width="21" height="22" viewBox="0 0 21 22"><path d="M4 0h2.500v3h8v-3h2.500v3h4v19h-21v-19h4z" fill="#fff"/><path d="M1.800 7.500h17.400v12.800h-17.400z" fill="#4386cd"/><g fill="#fff"><rect x="1.800" y="11.200" width="17.400" height="1"/><rect x="1.800" y="15.400" width="17.400" height="1"/><rect x="5.600" y="7.500" width="1" height="12.800"/><rect x="10" y="7.500" width="1" height="12.800"/><rect x="14.400" y="7.500" width="1" height="12.800"/></g><rect x="4.600" y="0.800" width="1.300" height="3.800" fill="#4386cd"/><rect x="15.100" y="0.800" width="1.300" height="3.800" fill="#4386cd"/></svg>
  <div class="a stn" style="left:2638px;width:113px">0</div>
  <div class="a stn" style="left:2752px;width:111px">0</div>
  <div class="a stl" style="left:2638px;width:113px">コール</div>
  <div class="a stl" style="left:2752px;width:111px">アポ</div>

  <div class="a" style="left:1958px;top:306px;width:906px;height:316px;background:#fff;border:1px solid #e3e9eb"></div>
  <div class="a c" id="rsave">保存</div>
  <table id="rsel" class="a">
    <tr><th>応対者</th><th>ステータス</th></tr>
    <tr><td><p>本人</p><p>代理者</p><p>受付</p></td><td><p>不在</p><p>連絡事項伝達</p><p>一次対応済</p><p>解消</p><p>再現確認必要</p></td></tr>
  </table>
  <div class="a" style="left:2836px;top:425px;width:14px;height:112px;border-radius:7px;background:#808080"></div>

  <div class="a gbtn c rb" style="left:1959px;top:630px;width:451px;height:50px">再コール</div>
  <div class="a gbtn c rb" style="left:2412px;top:630px;width:451px;height:50px">アポイント</div>

  <div class="a c" id="memoh">通話内容メモ</div>
  <div class="a" id="memo"><svg class="grip" style="bottom:2px" width="15" height="15" viewBox="0 0 15 15"><path d="M1 14L14 1M8 14L14 8" stroke="#555" stroke-width="1.400" fill="none"/></svg></div>

  <div class="a" style="left:1958px;top:834px;width:906px;height:56px;background:#f1f1f1;border:1px solid #e4e4e4;border-radius:4px"></div>
  <div class="a c tab" style="left:1959px;top:835px;width:301px;height:54px;background:#4285cc;color:#fff;border-radius:4px">ヒストリー</div>
  <div class="a c tab" style="left:2260px;top:835px;width:301px;height:54px">再コール</div>
  <div class="a c tab" style="left:2562px;top:835px;width:301px;height:54px">アポイント</div>

  <div class="a" style="left:1958px;top:889px;width:906px;height:558px;background:#fff;border:1px solid #dfe3e5"></div>
  <div class="a" style="left:1960.5px;top:890.5px;width:902px;height:554.5px;background:#fff;border:2px solid #dedede"></div>
  <div class="a" id="hist">
    <table><tr><th style="width:65px">種別</th><th style="width:242px">日時</th><th style="width:160px">作成者</th><th style="width:114px">通話時間</th><th style="width:161px">応対者</th><th style="width:144px">ステータス</th><th style="width:60px;text-align:left;padding-left:7px">備考</th></tr></table>
  </div>
</div>
<div id="redbox"></div>
<div id="shade"></div>
<svg class="a" style="left:0;top:1444px;z-index:9" width="14" height="24" viewBox="0 0 14 24"><path d="M0 4Q1.500 17 12 24H0z" fill="#000"/></svg>
<svg class="a" style="left:2866px;top:1458px;z-index:9" width="10" height="10" viewBox="0 0 10 10"><path d="M3 10Q8 8 10 3.500V10z" fill="#000"/></svg>
</body></html>
